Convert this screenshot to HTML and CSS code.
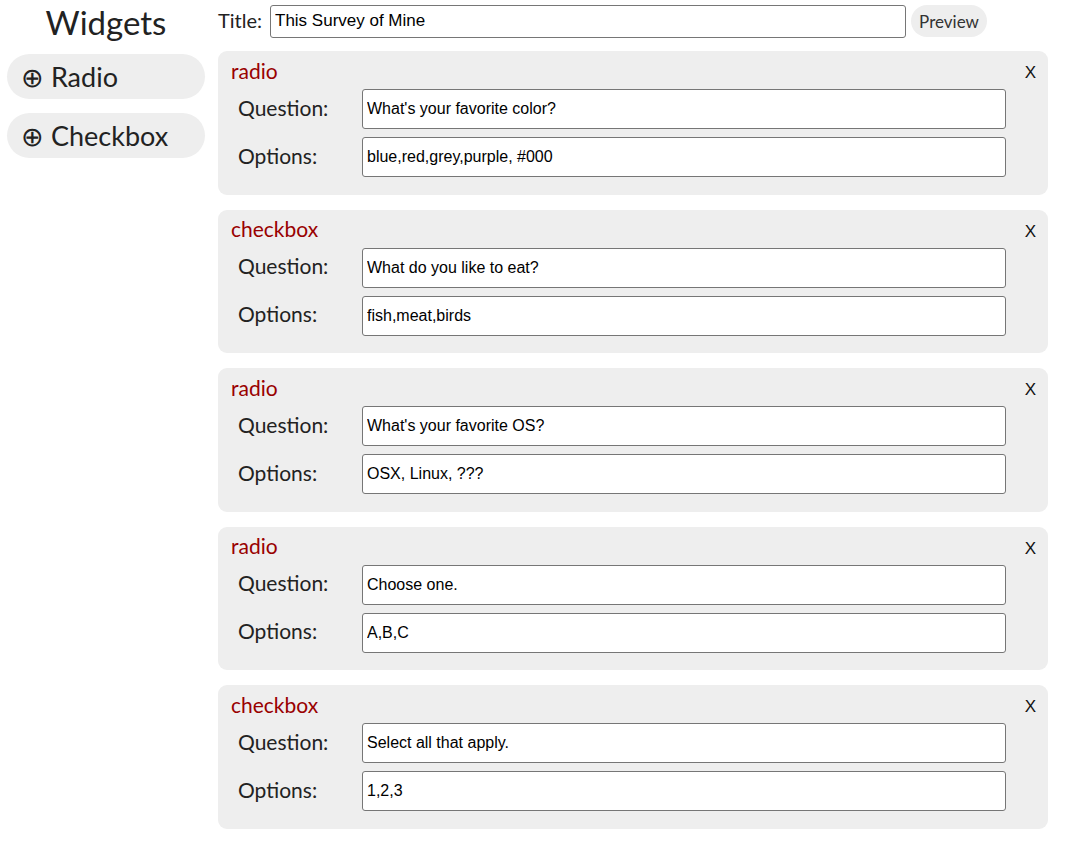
FILE: index.html
```html
<!DOCTYPE html>
<html>
<head>
<meta charset="utf-8">
<link rel="stylesheet" href="styles.css">
</head>
<body>
<div class="app">
  <aside class="sidebar">
    <h1 class="side-title">Widgets</h1>
    <button class="add-btn">⊕ Radio</button>
    <button class="add-btn">⊕ Checkbox</button>
  </aside>
  <main class="main">
    <div class="title-row">
      <label class="title-label">Title:</label>
      <input class="title-input" type="text" value="This Survey of Mine">
      <button class="preview-btn">Preview</button>
    </div>

    <section class="card">
      <div class="card-head"><span class="kind">radio</span><span class="close">X</span></div>
      <div class="row"><label class="lbl">Question:</label><input class="field" type="text" value="What's your favorite color?"></div>
      <div class="row"><label class="lbl">Options:</label><input class="field" type="text" value="blue,red,grey,purple, #000"></div>
    </section>

    <section class="card">
      <div class="card-head"><span class="kind">checkbox</span><span class="close">X</span></div>
      <div class="row"><label class="lbl">Question:</label><input class="field" type="text" value="What do you like to eat?"></div>
      <div class="row"><label class="lbl">Options:</label><input class="field" type="text" value="fish,meat,birds"></div>
    </section>

    <section class="card">
      <div class="card-head"><span class="kind">radio</span><span class="close">X</span></div>
      <div class="row"><label class="lbl">Question:</label><input class="field" type="text" value="What's your favorite OS?"></div>
      <div class="row"><label class="lbl">Options:</label><input class="field" type="text" value="OSX, Linux, ???"></div>
    </section>

    <section class="card">
      <div class="card-head"><span class="kind">radio</span><span class="close">X</span></div>
      <div class="row"><label class="lbl">Question:</label><input class="field" type="text" value="Choose one."></div>
      <div class="row"><label class="lbl">Options:</label><input class="field" type="text" value="A,B,C"></div>
    </section>

    <section class="card">
      <div class="card-head"><span class="kind">checkbox</span><span class="close">X</span></div>
      <div class="row"><label class="lbl">Question:</label><input class="field" type="text" value="Select all that apply."></div>
      <div class="row"><label class="lbl">Options:</label><input class="field" type="text" value="1,2,3"></div>
    </section>
  </main>
</div>
</body>
</html>
```

FILE: styles.css
```css
html, body {
  margin: 0;
  padding: 0;
  background: #fff;
}
body {
  font-family: Lato, "Open Sans", sans-serif;
  color: #222;
}
.app {
  display: flex;
  align-items: flex-start;
  padding: 0 0 0 7px;
}
.sidebar {
  width: 198px;
  flex: none;
  display: flex;
  flex-direction: column;
  gap: 14px;
}
.side-title {
  margin: 0;
  height: 40px;
  line-height: 44px;
  font-size: 33px;
  font-weight: 400;
  text-align: center;
  color: #222;
}
.add-btn {
  height: 45px;
  border: none;
  border-radius: 23px;
  background: #eee;
  text-align: left;
  padding: 0 0 0 14px;
  font-family: Lato, "Open Sans", sans-serif;
  font-size: 27px;
  color: #222;
}
.main {
  margin-left: 13px;
  width: 830px;
  display: flex;
  flex-direction: column;
  gap: 15px;
  padding-top: 5px;
}
.title-row {
  display: flex;
  align-items: center;
  height: 32px;
  margin-bottom: -1px;
}
.title-label {
  font-size: 20px;
  width: 52px;
  flex: none;
  line-height: 32px;
  margin-top: -2px;
}
.title-input {
  box-sizing: border-box;
  width: 636px;
  height: 33px;
  border: 1px solid #767676;
  border-radius: 3px;
  padding: 0 4px;
  font-family: "Liberation Sans", Arial, sans-serif;
  font-size: 17px;
  color: #000;
}
.preview-btn {
  margin-left: 5px;
  width: 76px;
  height: 32px;
  border: none;
  border-radius: 16px;
  background: #eee;
  font-family: Lato, "Open Sans", sans-serif;
  font-size: 17px;
  color: #333;
  padding: 0;
}
.card {
  background: #eee;
  border-radius: 9px;
  padding: 6px 12px 18px 13px;
  height: 143.5px;
  box-sizing: border-box;
}
.card-head {
  display: flex;
  justify-content: space-between;
  align-items: center;
  height: 26px;
  margin-bottom: 6px;
}
.kind {
  font-size: 21px;
  color: #990000;
}
.close {
  font-family: "Liberation Sans", Arial, sans-serif;
  font-size: 17px;
  color: #111;
  margin-top: 6px;
}
.row {
  display: flex;
  align-items: center;
  padding-left: 7px;
  margin-bottom: 8px;
}
.row:last-child {
  margin-bottom: 0;
}
.lbl {
  width: 124px;
  flex: none;
  font-size: 21px;
  color: #222;
  margin-top: -4px;
}
.field {
  box-sizing: border-box;
  width: 644px;
  height: 40px;
  border: 1px solid #767676;
  border-radius: 3px;
  padding: 0 4px;
  font-family: "Liberation Sans", Arial, sans-serif;
  font-size: 16px;
  color: #000;
  background: #fff;
}
```
